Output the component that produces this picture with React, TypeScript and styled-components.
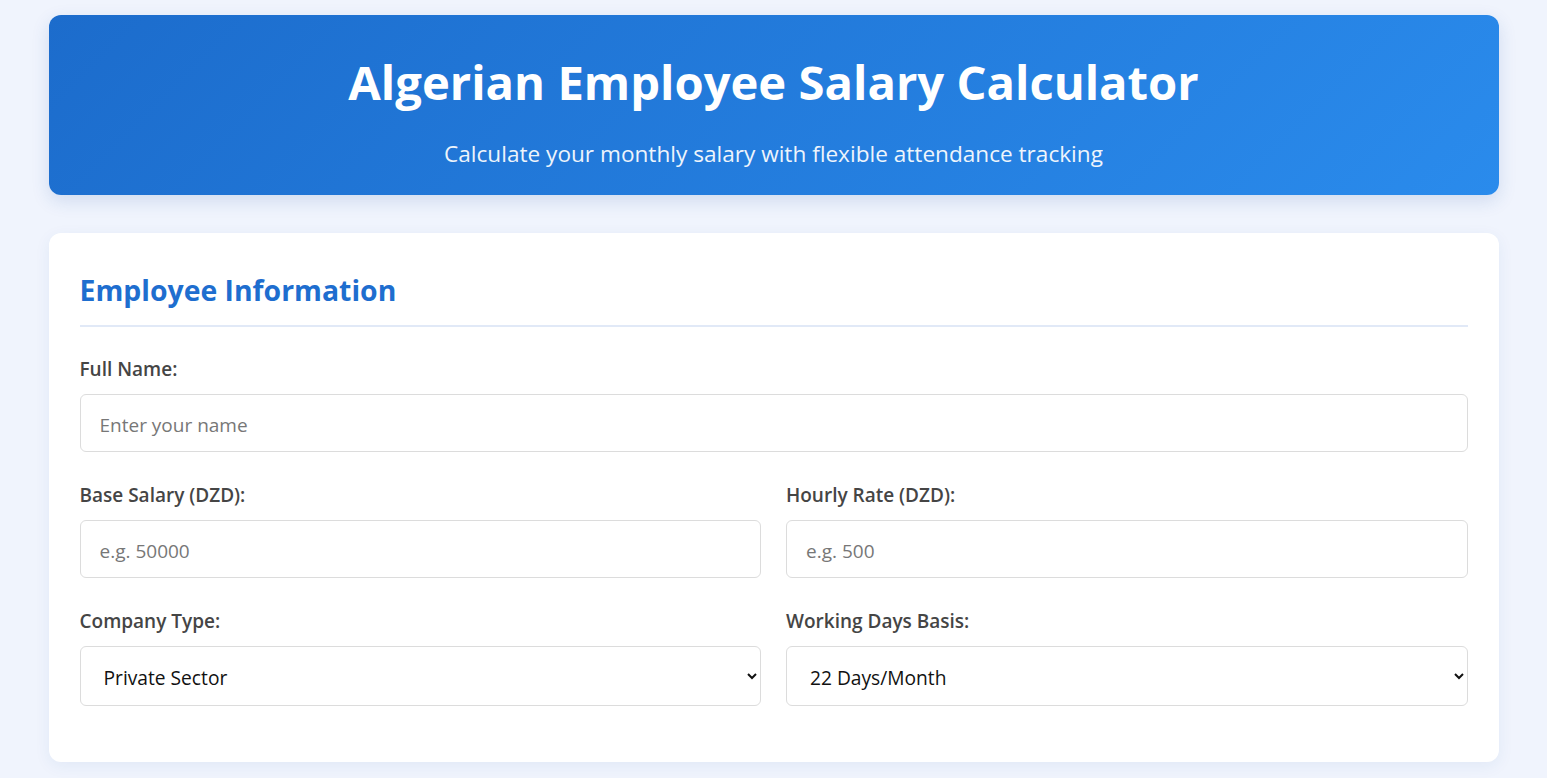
import React from "react";
import styled, { createGlobalStyle } from "styled-components";

const Global = createGlobalStyle`
  * { box-sizing: border-box; }
  html, body { margin: 0; padding: 0; }
  body {
    background: #f0f4fd;
    font-family: "Open Sans", "Noto Sans", sans-serif;
    color: #333;
  }
`;

const Page = styled.div`
  max-width: 1450px;
  margin: 0 auto;
  padding: 15px 0 20px;
`;

const Header = styled.header`
  background: linear-gradient(135deg, #1c6ccc 0%, #2a8bec 100%);
  border-radius: 12px;
  color: #fff;
  text-align: center;
  height: 180px;
  padding-top: 36px;
  box-shadow: 0 6px 18px rgba(30, 80, 160, 0.15);
  margin-bottom: 38px;
`;

const Title = styled.h1`
  margin: 0;
  font-size: 47.2px;
  font-weight: 700;
  line-height: 62px;
`;

const Subtitle = styled.p`
  margin: 26px 0 0;
  font-size: 22.6px;
  line-height: 30px;
  opacity: 0.92;
`;

const Card = styled.section`
  background: #fff;
  border-radius: 12px;
  padding: 37px 31px 25px;
  box-shadow: 0 4px 16px rgba(30, 80, 160, 0.07);
`;

const SectionTitle = styled.h2`
  margin: 0;
  color: #1e6ecf;
  font-size: 28.4px;
  font-weight: 700;
  line-height: 40px;
  padding-bottom: 15px;
  border-bottom: 2px solid #e1e9f7;
  margin-bottom: 30px;
`;

const Grid = styled.div`
  display: grid;
  grid-template-columns: 1fr 1fr;
  column-gap: 25px;
`;

const Field = styled.div<{ $full?: boolean }>`
  grid-column: ${(p) => (p.$full ? "1 / -1" : "auto")};
  margin-bottom: 31px;
`;

const Label = styled.label`
  display: block;
  font-size: 19px;
  font-weight: 600;
  color: #454545;
  line-height: 24px;
  margin-bottom: 13px;
`;

const Input = styled.input`
  display: block;
  width: 100%;
  height: 58px;
  border: 1px solid #dcdcdc;
  border-radius: 6px;
  padding: 4px 19px 0;
  font-family: inherit;
  font-size: 19px;
  color: #333;
  background: #fff;
  outline: none;
  &::placeholder { color: #777; }
`;

const Select = styled.select`
  display: block;
  width: 100%;
  height: 60px;
  border: 1px solid #dcdcdc;
  border-radius: 6px;
  padding: 2px 19px 0;
  font-family: inherit;
  font-size: 19.2px;
  color: #111;
  background: #fff;
  outline: none;
`;

export default function App() {
  return (
    <>
      <Global />
      <Page>
        <Header>
          <Title>Algerian Employee Salary Calculator</Title>
          <Subtitle>Calculate your monthly salary with flexible attendance tracking</Subtitle>
        </Header>
        <Card>
          <SectionTitle>Employee Information</SectionTitle>
          <Grid>
            <Field $full>
              <Label>Full Name:</Label>
              <Input placeholder="Enter your name" />
            </Field>
            <Field>
              <Label>Base Salary (DZD):</Label>
              <Input placeholder="e.g. 50000" />
            </Field>
            <Field>
              <Label>Hourly Rate (DZD):</Label>
              <Input placeholder="e.g. 500" />
            </Field>
            <Field>
              <Label>Company Type:</Label>
              <Select defaultValue="private">
                <option value="private">Private Sector</option>
                <option value="public">Public Sector</option>
              </Select>
            </Field>
            <Field>
              <Label>Working Days Basis:</Label>
              <Select defaultValue="22">
                <option value="22">22 Days/Month</option>
                <option value="26">26 Days/Month</option>
              </Select>
            </Field>
          </Grid>
        </Card>
      </Page>
    </>
  );
}
